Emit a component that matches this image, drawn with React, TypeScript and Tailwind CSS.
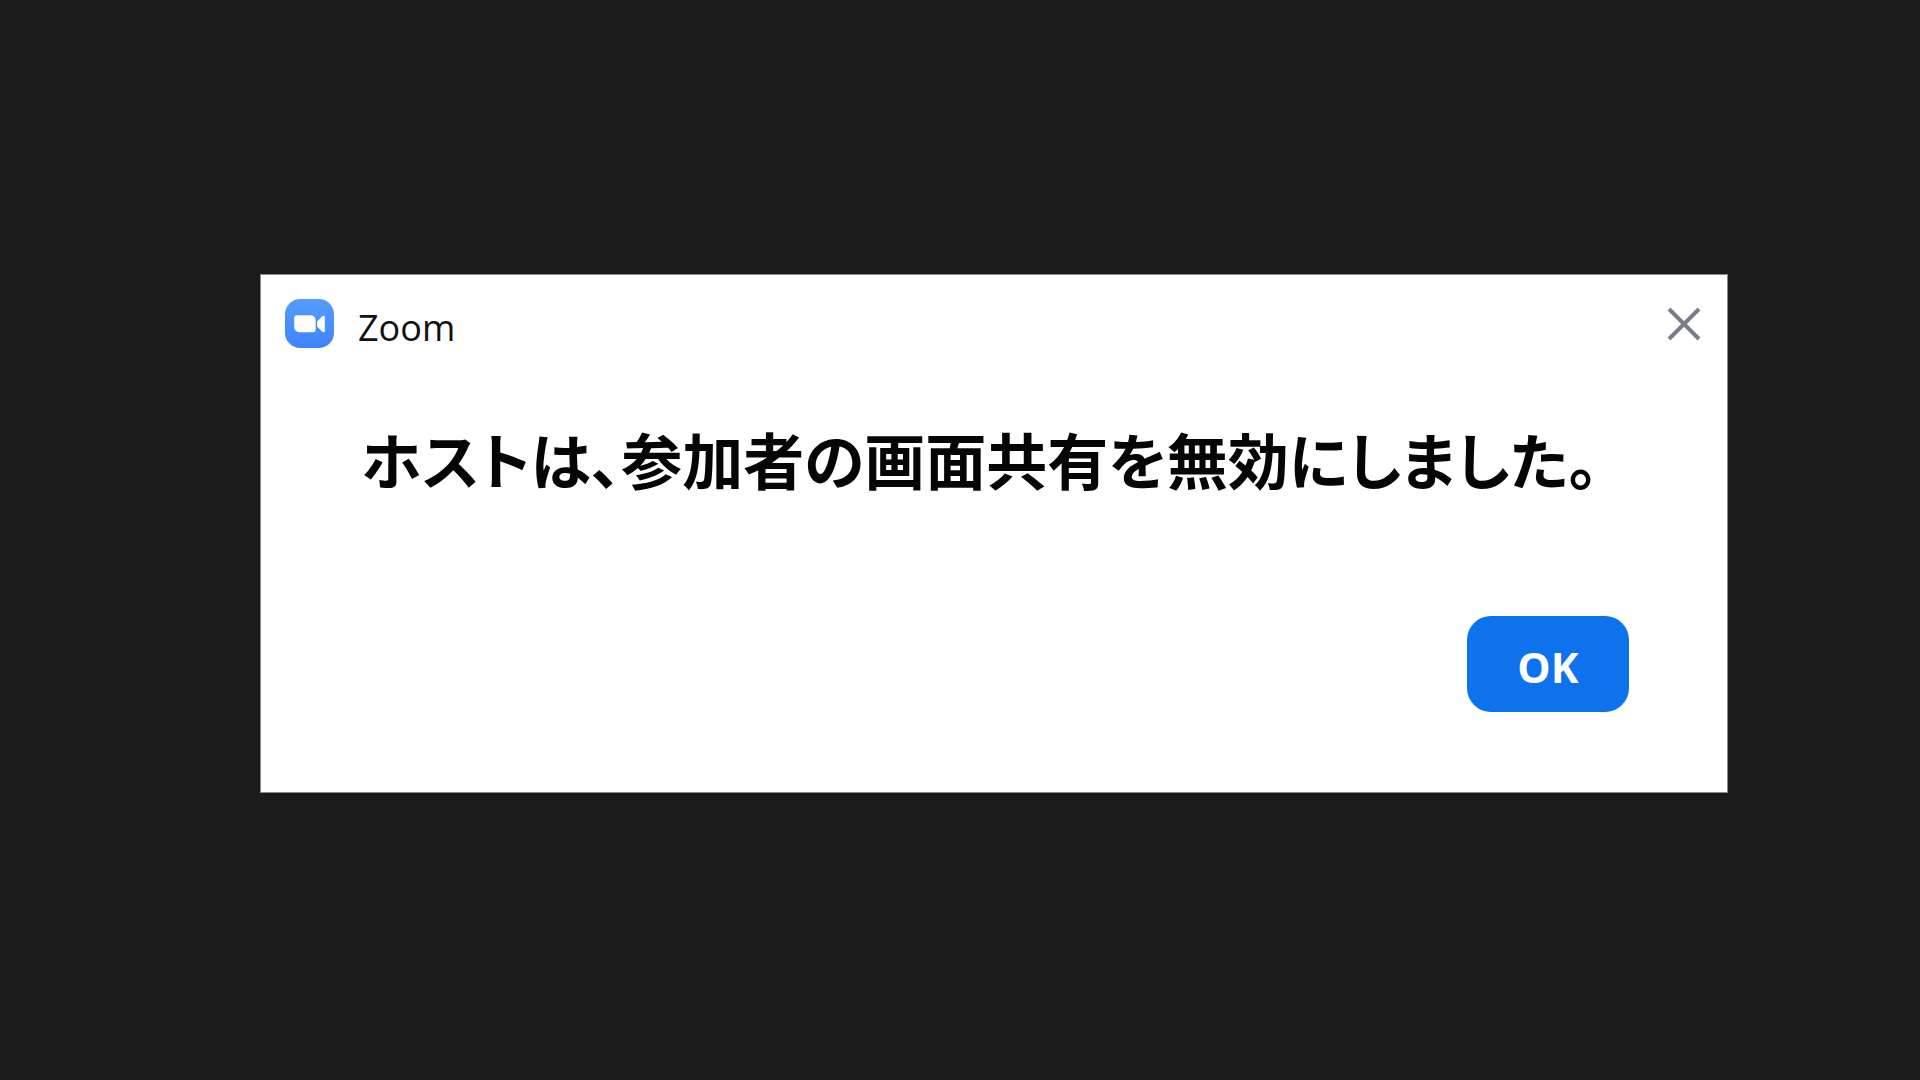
import { useState } from 'react';

const MESSAGE = 'ホストは、参加者の画面共有を無効にしました。';

function ZoomLogo() {
  return (
    <svg viewBox="0 0 48 48" className="h-[49px] w-[49px] shrink-0" aria-hidden="true">
      <defs>
        <linearGradient id="logo-fill" x1="0" y1="0" x2="0" y2="1">
          <stop offset="0" stopColor="#559cff" />
          <stop offset="1" stopColor="#3f83fb" />
        </linearGradient>
      </defs>
      <rect width="48" height="48" rx="15" fill="url(#logo-fill)" />
      <path d="M11.500 16H25a5 5 0 0 1 5 5v9.500a2 2 0 0 1-2 2H14a5 5 0 0 1-5-5V18.500A2.500 2.500 0 0 1 11.500 16Z" fill="#fff" />
      <path d="M31.500 22l5-5q2.500-1.500 2.500.5v14q0 2-2.500.5l-5-5Z" fill="#fff" />
    </svg>
  );
}

function CloseIcon() {
  return (
    <svg viewBox="0 0 34 34" className="h-[34px] w-[34px]" fill="none" stroke="#7b7d8b" strokeWidth="4" aria-hidden="true">
      <path d="M2 2l30 30M32 2L2 32" />
    </svg>
  );
}

export default function App() {
  const [open, setOpen] = useState(true);
  const close = () => setOpen(false);

  return (
    <main className="min-h-screen bg-[#1b1b1b] pt-[274px] pr-[192px] pb-16 pl-[260px]">
      {open && (
        <section
          role="dialog"
          aria-labelledby="dialog-title"
          aria-describedby="dialog-message"
          className="border border-[#8a8a8a] bg-white pb-20 font-['Open_Sans','Noto_Sans_CJK_JP',sans-serif]"
        >
          <header className="flex items-center justify-between px-6 pt-6">
            <div className="flex items-center gap-6">
              <ZoomLogo />
              <h1 id="dialog-title" className="pt-2 text-[36px] leading-10 text-[#111]">
                Zoom
              </h1>
            </div>
            <button type="button" aria-label="閉じる" onClick={close} className="mr-0.5 cursor-pointer">
              <CloseIcon />
            </button>
          </header>

          <p
            id="dialog-message"
            className="mt-[66px] px-[100px] text-[61px] leading-[96px] font-bold whitespace-nowrap text-[#050505] [font-feature-settings:'palt']"
          >
            {MESSAGE}
          </p>

          <div className="mt-[106px] flex justify-end px-[98px]">
            <button
              type="button"
              onClick={close}
              className="h-24 w-[162px] cursor-pointer rounded-3xl bg-[#0e72ed] pt-1.5 text-[42px] leading-12 font-bold text-white"
            >
              OK
            </button>
          </div>
        </section>
      )}
    </main>
  );
}
